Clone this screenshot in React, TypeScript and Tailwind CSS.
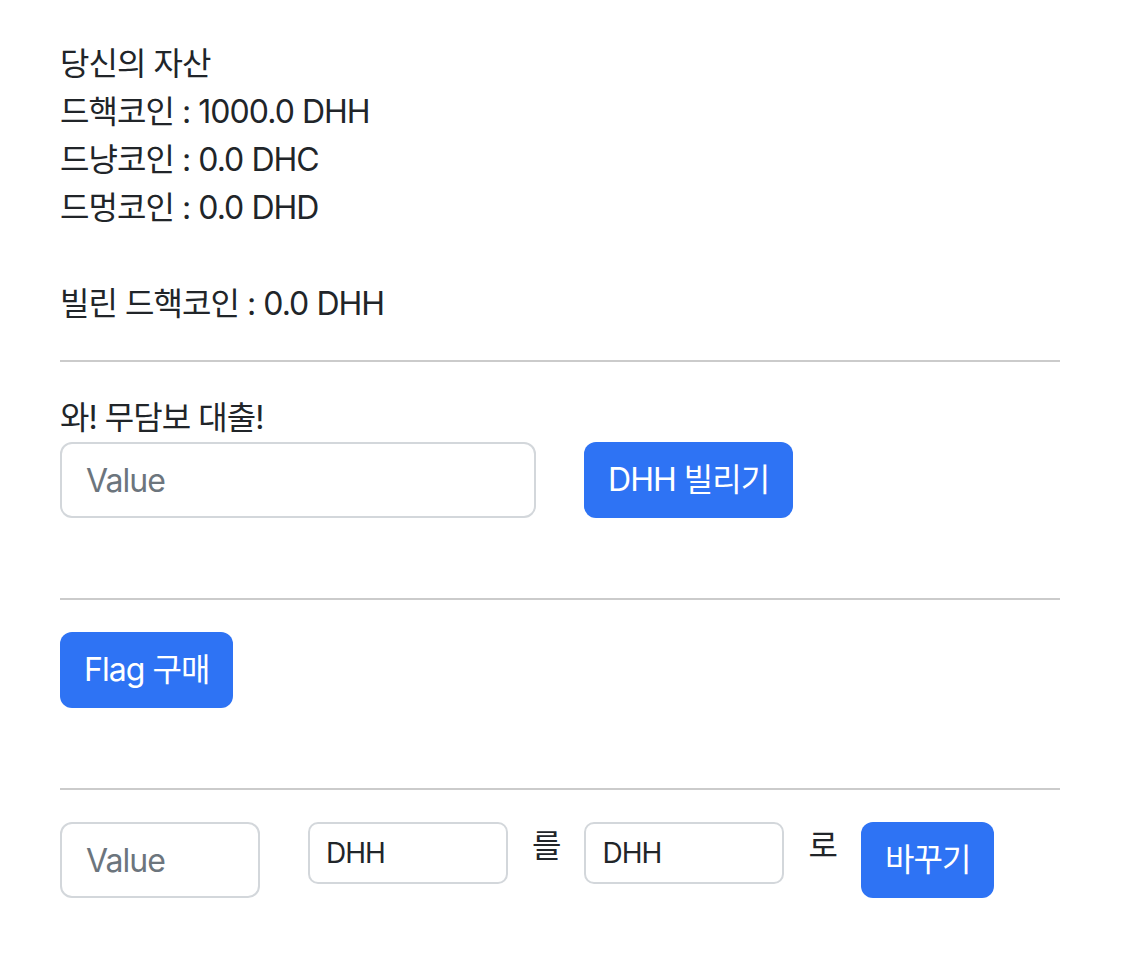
import React from "react";

const font = { fontFamily: '"Inter", "Noto Sans CJK KR", sans-serif' };

export default function App() {
  return (
    <div
      className="flex min-h-[968px] flex-col items-start bg-white px-[60px] pt-[40px] text-[32px] leading-[48px] tracking-[-0.03em] text-[#212529]"
      style={font}
    >
      <div>당신의 자산</div>
      <div>드핵코인 : 1000.0 DHH</div>
      <div>드냥코인 : 0.0 DHC</div>
      <div>드멍코인 : 0.0 DHD</div>
      <div className="h-[48px]" />
      <div>빌린 드핵코인 : 0.0 DHH</div>
      <hr className="my-8 w-[1000px] border-0 border-t-2 border-[#cbcbcb]" />

      <div>와! 무담보 대출!</div>
      <div className="mb-12 flex items-start gap-12">
        <input
          placeholder="Value"
          className="h-[76px] w-[476px] rounded-[12px] border-2 border-[#d3d7db] px-6 text-[32px] text-[#212529] placeholder:text-[#6c757d] outline-none"
        />
        <button className="h-[76px] rounded-[12px] bg-[#2e73f4] px-6 text-[32px] text-white">
          DHH 빌리기
        </button>
      </div>
      <hr className="my-8 w-[1000px] border-0 border-t-2 border-[#cbcbcb]" />

      <div className="mb-12">
        <button className="h-[76px] rounded-[12px] bg-[#2e73f4] px-6 text-[32px] text-white">
          Flag 구매
        </button>
      </div>
      <hr className="my-8 w-[1000px] border-0 border-t-2 border-[#cbcbcb]" />

      <div className="flex items-start">
        <input
          placeholder="Value"
          className="h-[76px] w-[200px] rounded-[12px] border-2 border-[#d3d7db] px-6 text-[32px] text-[#212529] placeholder:text-[#6c757d] outline-none"
        />
        <input
          defaultValue="DHH"
          className="ml-12 h-[62px] w-[200px] rounded-[10px] border-2 border-[#d3d7db] px-4 text-[28px] text-[#212529] outline-none"
        />
        <span className="mx-6 leading-[48px]">를</span>
        <input
          defaultValue="DHH"
          className="h-[62px] w-[200px] rounded-[10px] border-2 border-[#d3d7db] px-4 text-[28px] text-[#212529] outline-none"
        />
        <span className="mx-6 leading-[48px]">로</span>
        <button className="h-[76px] rounded-[12px] bg-[#2e73f4] px-6 text-[32px] text-white">
          바꾸기
        </button>
      </div>
    </div>
  );
}
